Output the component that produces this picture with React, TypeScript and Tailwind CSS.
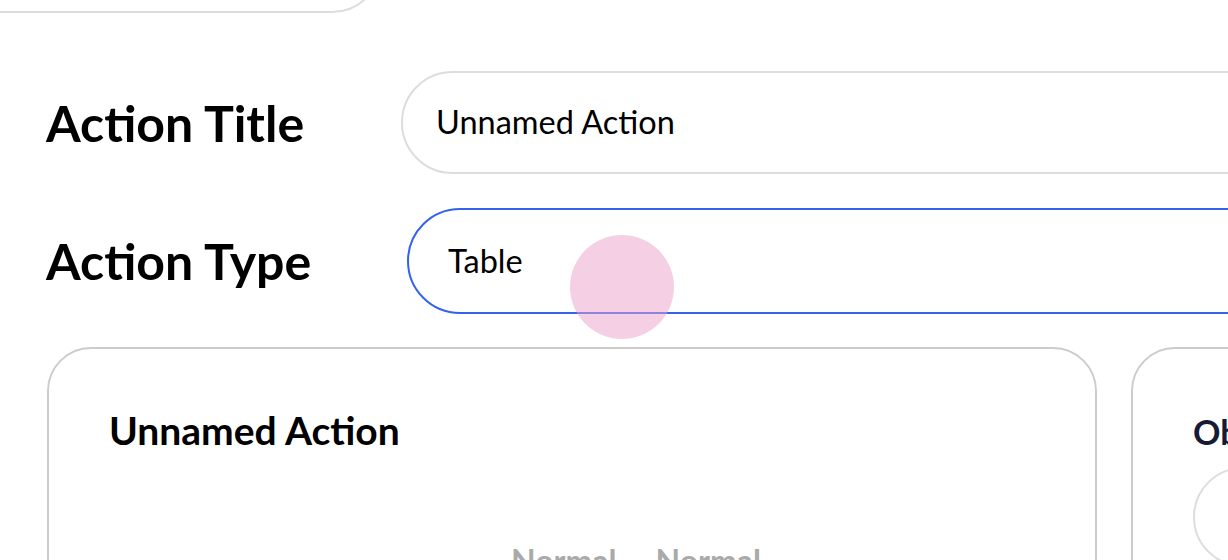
import React from "react";

export default function App() {
  return (
    <div
      className="w-[1228px] h-[560px] overflow-hidden bg-white relative"
      style={{ fontFamily: "Lato, 'Open Sans', sans-serif" }}
    >
      <div className="h-[100px] w-[440px] -ml-[58px] -mt-[87px] border-2 border-[#dddddd] rounded-full" />

      <div className="mt-[58px] flex items-center">
        <div className="w-[401px] shrink-0 pl-[46px] text-[50px] font-bold text-black leading-none">
          Action Title
        </div>
        <div className="h-[103px] w-[1000px] shrink-0 border-2 border-[#dddddd] rounded-full flex items-center pl-[33px] text-[32.5px] text-black">
          Unnamed Action
        </div>
      </div>

      <div className="mt-[34px] flex items-center">
        <div className="w-[407px] shrink-0 pl-[46px] text-[50px] font-bold text-black leading-none">
          Action Type
        </div>
        <div className="relative h-[106px] w-[1000px] shrink-0 border-2 border-[#3462ee] rounded-full flex items-center pl-[39px] text-[32.5px] text-black">
          Table
          <div className="absolute left-[161px] top-[25px] w-[104px] h-[104px] rounded-full bg-[#eca0c8]/50" />
        </div>
      </div>

      <div className="mt-[33px] flex gap-[34px] pl-[47px]">
        <div className="w-[1050px] h-[320px] shrink-0 border-2 border-[#cccccc] rounded-[44px] pt-[62px] pl-[60px]">
          <div className="text-[39px] font-bold text-black leading-none">Unnamed Action</div>
          <div className="mt-[95px] ml-[402px] flex gap-[39px] text-[32px] font-bold text-[#aaaaaa] leading-none">
            <span>Normal</span>
            <span>Normal</span>
          </div>
        </div>
        <div className="w-[400px] h-[320px] shrink-0 border-2 border-[#cccccc] rounded-[44px] pt-[66px] pl-[60px]">
          <div className="text-[34px] font-bold text-[#161b33] leading-none">Objects</div>
          <div className="mt-[18px] h-[100px] w-[300px] border-2 border-[#dddddd] rounded-full" />
        </div>
      </div>
    </div>
  );
}
